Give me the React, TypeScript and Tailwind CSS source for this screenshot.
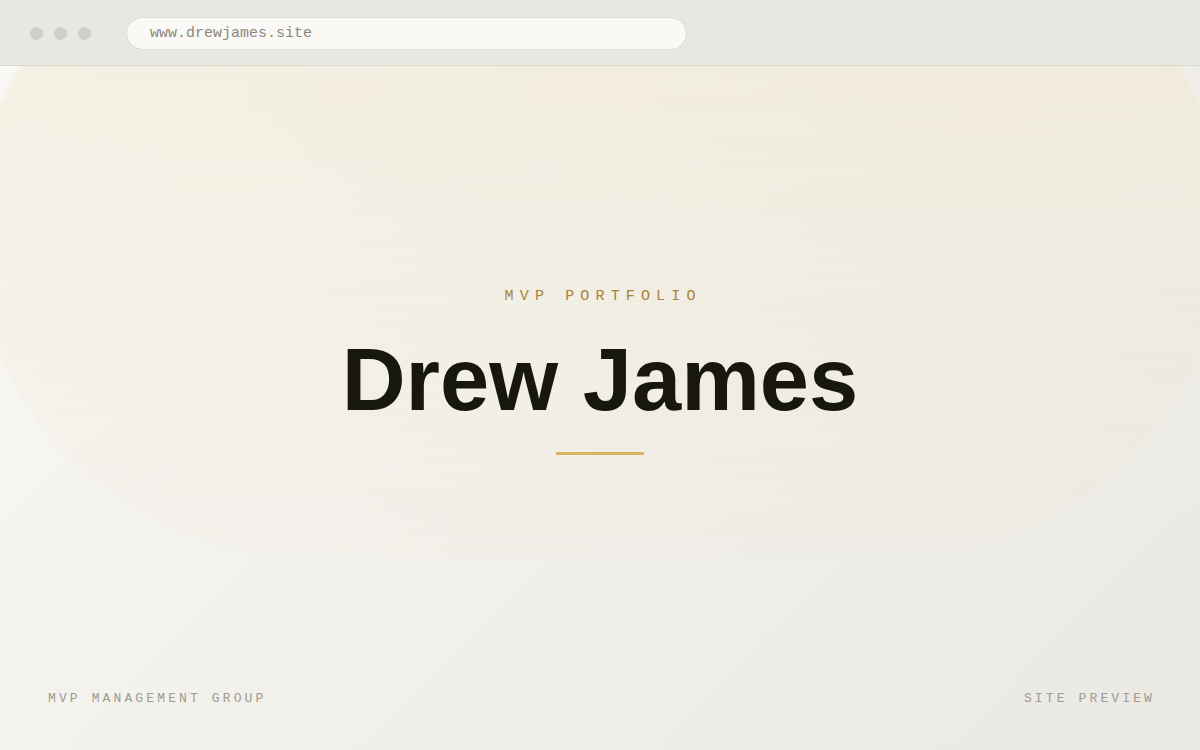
import React from "react";

const mono = { fontFamily: '"Liberation Mono", "DejaVu Sans Mono", monospace' };
const sans = { fontFamily: '"Liberation Sans", Arial, sans-serif' };

export default function App() {
  return (
    <div className="w-[1200px] h-[750px] flex flex-col overflow-hidden bg-[#ecebe6]">
      {/* Browser chrome */}
      <div className="h-[66px] shrink-0 flex items-center bg-[#e9e7e1] border-b border-[#dad7cf] pl-[30px] pt-px">
        <div className="flex items-center gap-[11px]">
          <span className="w-[13px] h-[13px] rounded-full bg-[#d0cec8]" />
          <span className="w-[13px] h-[13px] rounded-full bg-[#d0cec8]" />
          <span className="w-[13px] h-[13px] rounded-full bg-[#d0cec8]" />
        </div>
        <div className="ml-[35px] w-[561px] h-[33px] rounded-full bg-[#faf9f5] border border-[#dedbd4] flex items-center pl-[23px]">
          <span className="text-[15px] leading-none text-[#8a877f] pt-px" style={mono}>
            www.drewjames.site
          </span>
        </div>
      </div>

      {/* Page */}
      <div className="relative flex-1 flex flex-col overflow-hidden bg-[linear-gradient(135deg,#f9f8f4_0%,#f2f0ea_50%,#eae8e2_100%)]">
        <div className="pointer-events-none absolute left-[-24px] top-[-163px] w-[1248px] h-[654px] rounded-full bg-[linear-gradient(180deg,rgba(241,230,204,0.55)_0%,rgba(240,232,212,0.32)_55%,rgba(238,234,222,0.08)_100%)] blur-[1px]" />

        <div className="relative flex-1 flex flex-col items-center pt-[220px]">
          <div
            className="text-[15px] leading-[20px] tracking-[0.41em] pl-[0.41em] text-[#a8843a] pt-px"
            style={mono}
          >
            MVP PORTFOLIO
          </div>
          <h1
            className="mt-[29px] text-[88.5px] leading-none font-bold text-[#17160f]"
            style={sans}
          >
            Drew James
          </h1>
          <div className="mt-[27px] w-[88px] h-[3px] bg-[#d6b463]" />
        </div>

        <div className="relative flex justify-between items-center px-[48px] pb-[43px]">
          <span className="text-[13px] leading-4 tracking-[0.24em] text-[#9d9a92]" style={mono}>
            MVP MANAGEMENT GROUP
          </span>
          <span className="text-[13px] leading-4 tracking-[0.24em] text-[#9d9a92] mr-[-3px]" style={mono}>
            SITE PREVIEW
          </span>
        </div>
      </div>
    </div>
  );
}
